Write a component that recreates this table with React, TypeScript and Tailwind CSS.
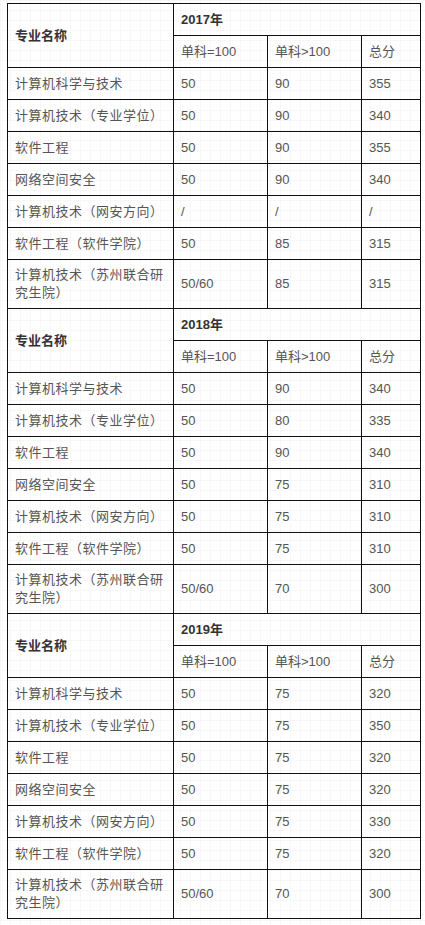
import React from "react";

type Row = { name: string; a: string; b: string; total: string };

const sections: { year: string; rows: Row[] }[] = [
  {
    year: "2017年",
    rows: [
      { name: "计算机科学与技术", a: "50", b: "90", total: "355" },
      { name: "计算机技术（专业学位）", a: "50", b: "90", total: "340" },
      { name: "软件工程", a: "50", b: "90", total: "355" },
      { name: "网络空间安全", a: "50", b: "90", total: "340" },
      { name: "计算机技术（网安方向）", a: "/", b: "/", total: "/" },
      { name: "软件工程（软件学院）", a: "50", b: "85", total: "315" },
      { name: "计算机技术（苏州联合研究生院）", a: "50/60", b: "85", total: "315" },
    ],
  },
  {
    year: "2018年",
    rows: [
      { name: "计算机科学与技术", a: "50", b: "90", total: "340" },
      { name: "计算机技术（专业学位）", a: "50", b: "80", total: "335" },
      { name: "软件工程", a: "50", b: "90", total: "340" },
      { name: "网络空间安全", a: "50", b: "75", total: "310" },
      { name: "计算机技术（网安方向）", a: "50", b: "75", total: "310" },
      { name: "软件工程（软件学院）", a: "50", b: "75", total: "310" },
      { name: "计算机技术（苏州联合研究生院）", a: "50/60", b: "70", total: "300" },
    ],
  },
  {
    year: "2019年",
    rows: [
      { name: "计算机科学与技术", a: "50", b: "75", total: "320" },
      { name: "计算机技术（专业学位）", a: "50", b: "75", total: "350" },
      { name: "软件工程", a: "50", b: "75", total: "320" },
      { name: "网络空间安全", a: "50", b: "75", total: "320" },
      { name: "计算机技术（网安方向）", a: "50", b: "75", total: "330" },
      { name: "软件工程（软件学院）", a: "50", b: "75", total: "320" },
      { name: "计算机技术（苏州联合研究生院）", a: "50/60", b: "70", total: "300" },
    ],
  },
];

const cell = "border border-[#111] px-[7px] py-[6px] align-middle text-left leading-[18px]";

const App = () => {
  return (
    <div
      className="w-[425px] h-[925px] bg-white bg-[linear-gradient(to_right,#f7f7f7_1px,transparent_1px),linear-gradient(to_bottom,#f7f7f7_1px,transparent_1px)] bg-[size:10px_10px] pt-[3px] pl-[7px]"
      style={{ fontFamily: '"Liberation Sans", "Noto Sans CJK SC", sans-serif' }}
    >
      <table className="w-[413px] table-fixed border-collapse text-[13px] text-[#555]">
        <colgroup>
          <col className="w-[166px]" />
          <col className="w-[94px]" />
          <col className="w-[94px]" />
          <col className="w-[59px]" />
        </colgroup>
        <tbody>
          {sections.map((s) => (
            <React.Fragment key={s.year}>
              <tr className="h-[32px]">
                <td rowSpan={2} className={`${cell} font-bold text-[#333]`}>
                  专业名称
                </td>
                <td colSpan={3} className={`${cell} font-bold text-[#333]`}>
                  {s.year}
                </td>
              </tr>
              <tr className="h-[32px]">
                <td className={cell}>单科=100</td>
                <td className={cell}>单科&gt;100</td>
                <td className={cell}>总分</td>
              </tr>
              {s.rows.map((r) => (
                <tr key={r.name} className="h-[32px]">
                  <td className={`${cell} text-justify tracking-[0.5px]`}>{r.name}</td>
                  <td className={cell}>{r.a}</td>
                  <td className={cell}>{r.b}</td>
                  <td className={cell}>{r.total}</td>
                </tr>
              ))}
            </React.Fragment>
          ))}
        </tbody>
      </table>
    </div>
  );
};

export default App;
